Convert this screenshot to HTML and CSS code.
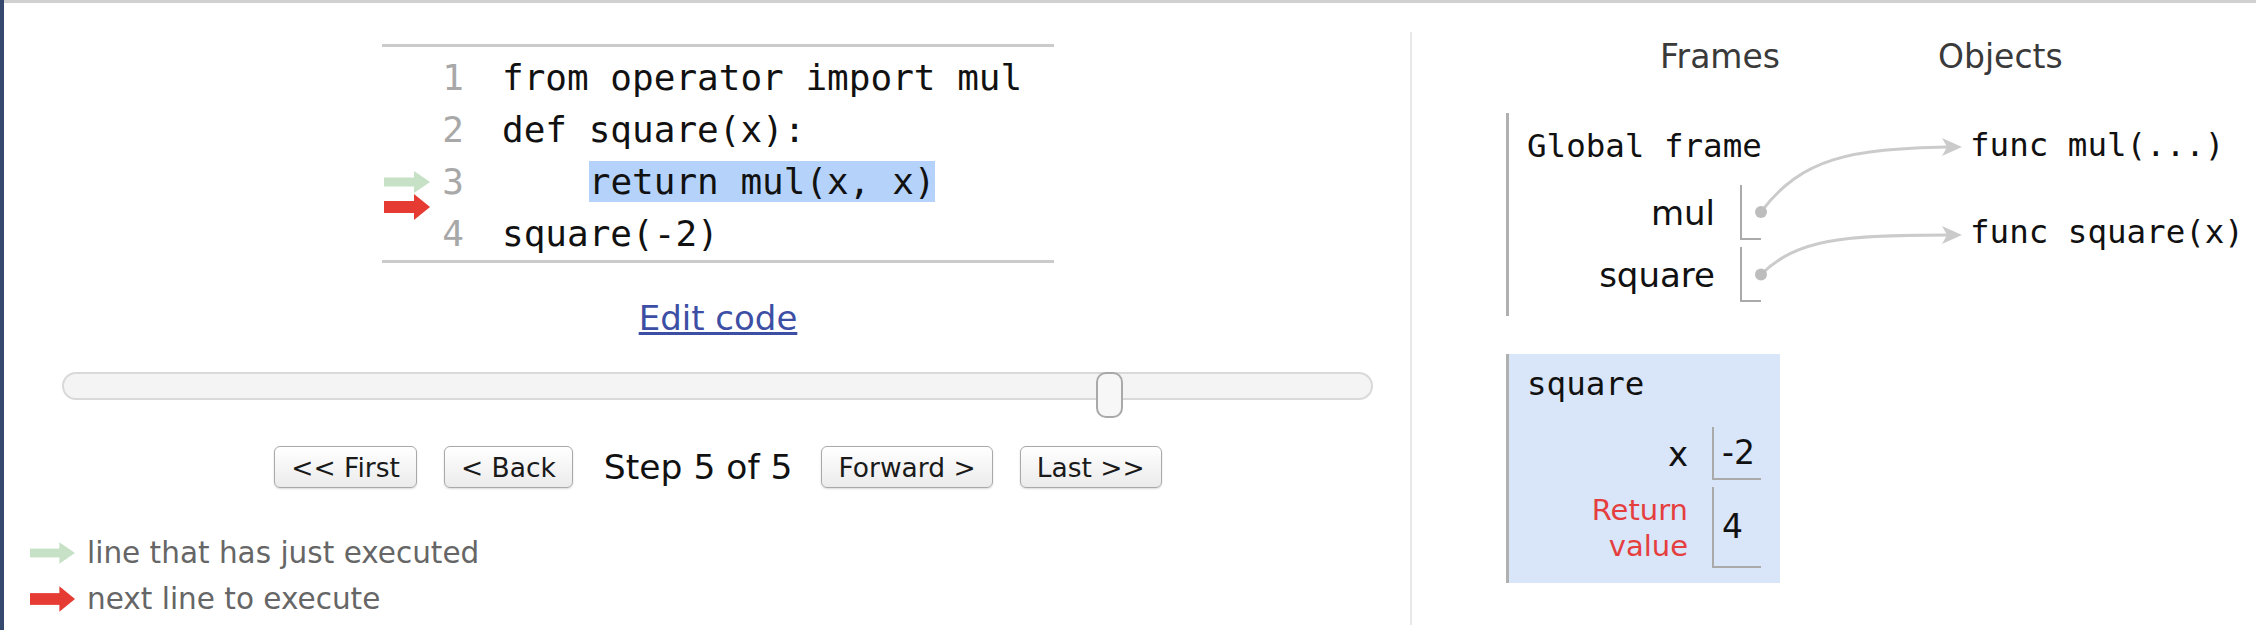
FILE: index.html
```html
<!DOCTYPE html>
<html lang="en">
<head>
<meta charset="utf-8">
<title>Python Tutor</title>
<link rel="stylesheet" href="styles.css">
</head>
<body>
<div class="window">
  <div class="viz">
    <div class="left">
      <div class="code">
        <div class="gutter"></div><div class="ln">1</div><div class="src">from operator import mul</div>
        <div class="gutter"></div><div class="ln">2</div><div class="src">def square(x):</div>
        <div class="gutter">
          <svg class="arrow-green" width="46" height="22" viewBox="0 0 46 22"><rect x="0" y="6.5" width="31" height="9" fill="#c6e1c6"/><polygon points="30,0 46,11 30,22" fill="#c6e1c6"/></svg>
          <svg class="arrow-red" width="46" height="26" viewBox="0 0 46 26"><rect x="0" y="7" width="31" height="12" fill="#e53b32"/><polygon points="30,0 46,13 30,26" fill="#e53b32"/></svg>
        </div><div class="ln">3</div><div class="src">    <span class="hl">return mul(x, x)</span></div>
        <div class="gutter"></div><div class="ln">4</div><div class="src">square(-2)</div>
      </div>
      <div class="edit"><a href="#">Edit code</a></div>
      <div class="slider">
        <div class="track"></div>
        <div class="handle" style="left: 78.9%"></div>
      </div>
      <div class="controls">
        <button class="btn">&lt;&lt; First</button>
        <button class="btn">&lt; Back</button>
        <span class="step">Step 5 of 5</span>
        <button class="btn">Forward &gt;</button>
        <button class="btn">Last &gt;&gt;</button>
      </div>
      <div class="legend">
        <div class="legend-row">
          <svg width="45" height="22" viewBox="0 0 46 22"><rect x="0" y="6.5" width="31" height="9" fill="#c6e1c6"/><polygon points="30,0 46,11 30,22" fill="#c6e1c6"/></svg>
          <span>line that has just executed</span>
        </div>
        <div class="legend-row">
          <svg width="45" height="26" viewBox="0 0 46 26"><rect x="0" y="7" width="31" height="12" fill="#e53b32"/><polygon points="30,0 46,13 30,26" fill="#e53b32"/></svg>
          <span>next line to execute</span>
        </div>
      </div>
    </div>
    <div class="right">
      <div class="stack-col">
        <div class="col-header">Frames</div>
        <div class="frame global">
          <div class="frame-name">Global frame</div>
          <div class="vars">
            <div class="label">mul</div><div class="val ptr"></div>
            <div class="label">square</div><div class="val ptr"></div>
          </div>
        </div>
        <div class="frame current">
          <div class="frame-name">square</div>
          <div class="vars">
            <div class="label">x</div><div class="val num">-2</div>
            <div class="label retval">Return<br>value</div><div class="val num">4</div>
          </div>
        </div>
      </div>
      <div class="heap-col">
        <div class="col-header">Objects</div>
        <div class="heap-objs">
          <div class="heap-obj">func mul(...)</div>
          <div class="heap-obj">func square(x)</div>
        </div>
      </div>
      <svg class="links" width="844" height="593" viewBox="0 0 844 593">
        <path d="M349,180 C390,125 440,117 536,115" fill="none" stroke="#cbcbcb" stroke-width="3"/>
        <polygon points="550,115 530,106 535,115 530,124" fill="#cbcbcb"/>
        <path d="M349,242.5 C385,207 430,203 536,203" fill="none" stroke="#cbcbcb" stroke-width="3"/>
        <polygon points="550,203 530,194 535,203 530,212" fill="#cbcbcb"/>
        <circle cx="349" cy="180" r="6" fill="#bdbdbd"/>
        <circle cx="349" cy="242.5" r="6" fill="#bdbdbd"/>
      </svg>
    </div>
  </div>
</div>
</body>
</html>
```
FILE: styles.css
```css
* { box-sizing: border-box; }

html, body {
  margin: 0;
  padding: 0;
  background: #fff;
}

body {
  width: 2256px;
  height: 630px;
  overflow: hidden;
  border-left: 4px solid #34496d;
  font-family: "DejaVu Sans", Verdana, sans-serif;
  color: #111;
}

.window {
  height: 630px;
  border-top: 3px solid #d0d0d0;
}

.viz {
  display: flex;
  height: 627px;
}

/* ---------- left: code + controls ---------- */
.left {
  width: 1406px;
  flex: none;
  padding-left: 26px;
  padding-right: 4px;
}

.code {
  width: 672px;
  margin: 41px auto 0;
  border-top: 3px solid #cbcbcb;
  border-bottom: 3px solid #cbcbcb;
  padding-top: 5px;
  display: grid;
  grid-template-columns: 51px 31px 1fr;
  font-family: "DejaVu Sans Mono", monospace;
  font-size: 36px;
  line-height: 52px;
}

.gutter {
  position: relative;
  display: flex;
  align-items: center;
  padding-left: 2px;
}

.arrow-green { display: block; }

.arrow-red {
  position: absolute;
  left: 2px;
  top: 38px;
}

.ln {
  text-align: right;
  color: #a8a8a8;
}

.src {
  padding-left: 38px;
  white-space: pre;
  color: #111;
}

.hl { background: #b5d3fa; }

.edit {
  text-align: center;
  margin-top: 35px;
  font-size: 34px;
  line-height: 40px;
}

.edit a {
  color: #3c4fa5;
  text-decoration: underline;
}

.slider {
  position: relative;
  height: 46px;
  margin: 34px 33px 0 32px;
}

.track {
  margin-top: 8px;
  height: 28px;
  background: #f4f4f4;
  border: 2px solid #d9d9d9;
  border-radius: 14px;
}

.handle {
  position: absolute;
  top: 0;
  width: 27px;
  height: 46px;
  background: #f7f7f7;
  border: 2px solid #a9a9a9;
  border-radius: 10px;
}

.controls {
  display: flex;
  justify-content: center;
  align-items: center;
  gap: 27px;
  margin-top: 28px;
  height: 42px;
}

.btn {
  height: 42px;
  padding: 0 16px;
  font-family: "DejaVu Sans", Verdana, sans-serif;
  font-size: 26.5px;
  color: #1a1a1a;
  border: 1px solid #a9a9a9;
  border-radius: 6px;
  background: linear-gradient(#ffffff, #ebebeb);
  box-shadow: 0 1px 2px rgba(0, 0, 0, 0.15);
}

.step {
  font-size: 34.5px;
  margin: 0 2px 0 4px;
  color: #111;
}

.legend { margin-top: 42px; }

.legend-row {
  display: flex;
  align-items: center;
  gap: 12px;
  height: 46px;
  font-size: 29.5px;
  color: #666;
}

.legend-row svg { display: block; }

/* ---------- right: frames + objects ---------- */
.right {
  position: relative;
  flex: 1;
  display: flex;
  margin-top: 29px;
  height: 593px;
  border-left: 2px solid #e8e8e8;
  padding-left: 94px;
}

.stack-col {
  width: 274px;
  flex: none;
}

.heap-col {
  margin-left: 158px;
}

.col-header {
  font-size: 33px;
  line-height: 40px;
  padding-top: 5px;
  color: #3a3a3a;
}

.stack-col .col-header { text-align: right; }

.frame {
  border-left: 3px solid #b0b0b0;
  padding: 14px 19px 14px 18px;
}

.frame-name {
  font-family: "DejaVu Sans Mono", monospace;
  font-size: 32.5px;
  line-height: 39px;
  white-space: nowrap;
  color: #111;
}

.vars {
  display: grid;
  grid-template-columns: auto auto;
  justify-content: end;
  row-gap: 7px;
}

.global { margin-top: 36px; }

.global .vars {
  margin-top: 19px;
  column-gap: 25px;
  grid-auto-rows: 55px;
}

.current {
  margin-top: 38px;
  background: #d9e5f8;
  padding-top: 11px;
  padding-bottom: 15px;
}

.current .vars {
  margin-top: 23px;
  column-gap: 24px;
  grid-template-rows: 53px 81px;
}

.label {
  display: flex;
  align-items: center;
  justify-content: flex-end;
  text-align: right;
  font-size: 34px;
  color: #111;
}

.label.retval {
  font-size: 29px;
  line-height: 36px;
  color: #e53e3e;
}

.val {
  display: flex;
  align-items: center;
  border-left: 2px solid #aaa;
  border-bottom: 2px solid #aaa;
}

.ptr { width: 21px; }

.num {
  width: 49px;
  padding-left: 8px;
  font-size: 33px;
  color: #111;
}

.heap-objs {
  padding-left: 32px;
  margin-top: 49px;
  font-family: "DejaVu Sans Mono", monospace;
  font-size: 32.5px;
  line-height: 39px;
  color: #111;
  white-space: nowrap;
}

.heap-obj + .heap-obj { margin-top: 48px; }

.links {
  position: absolute;
  left: 0;
  top: 0;
  pointer-events: none;
}
```
